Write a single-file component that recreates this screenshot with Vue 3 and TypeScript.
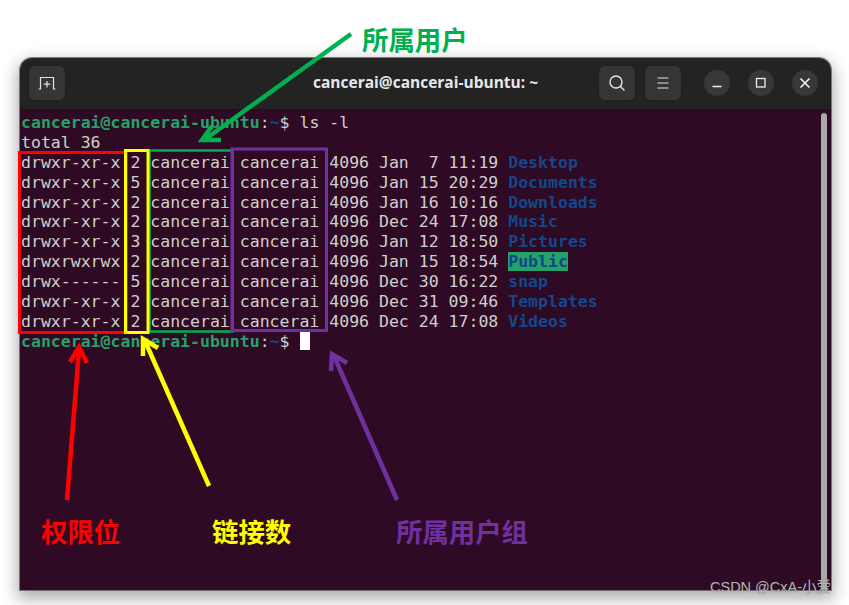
<script setup lang="ts">
interface Row { meta: string; name: string; hl?: boolean }
const rows: Row[] = [
  { meta: 'drwxr-xr-x 2 cancerai cancerai 4096 Jan  7 11:19 ', name: 'Desktop' },
  { meta: 'drwxr-xr-x 5 cancerai cancerai 4096 Jan 15 20:29 ', name: 'Documents' },
  { meta: 'drwxr-xr-x 2 cancerai cancerai 4096 Jan 16 10:16 ', name: 'Downloads' },
  { meta: 'drwxr-xr-x 2 cancerai cancerai 4096 Dec 24 17:08 ', name: 'Music' },
  { meta: 'drwxr-xr-x 3 cancerai cancerai 4096 Jan 12 18:50 ', name: 'Pictures' },
  { meta: 'drwxrwxrwx 2 cancerai cancerai 4096 Jan 15 18:54 ', name: 'Public', hl: true },
  { meta: 'drwx------ 5 cancerai cancerai 4096 Dec 30 16:22 ', name: 'snap' },
  { meta: 'drwxr-xr-x 2 cancerai cancerai 4096 Dec 31 09:46 ', name: 'Templates' },
  { meta: 'drwxr-xr-x 2 cancerai cancerai 4096 Dec 24 17:08 ', name: 'Videos' },
]
</script>

<template>
  <div class="page">
    <section class="window">
      <header class="titlebar">
        <button class="tool">
          <svg width="18" height="18" viewBox="0 0 18 18" fill="none" stroke="#e4e4e4" stroke-width="1.2">
            <path d="M1 15h1.500V3.500h13V15H17" stroke-linecap="round" stroke-linejoin="round" />
            <path d="M9 7v6.500M5.700 10.200h6.600" />
          </svg>
        </button>
        <h1 class="title">cancerai@cancerai-ubuntu: ~</h1>
        <button class="tool">
          <svg width="18" height="18" viewBox="0 0 18 18" fill="none" stroke="#e4e4e4" stroke-width="1.4">
            <circle cx="8" cy="8" r="6" />
            <path d="M12.400 12.400l3.600 3.600" stroke-linecap="round" />
          </svg>
        </button>
        <button class="tool menu">
          <svg width="14" height="14" viewBox="0 0 14 14" fill="none" stroke="#e4e4e4" stroke-width="1.100">
            <path d="M1.500 2h11M1.500 7h11M1.500 12h11" />
          </svg>
        </button>
        <div class="controls">
          <button class="circle">
            <svg width="12" height="12" viewBox="0 0 12 12" fill="none" stroke="#eee" stroke-width="1.500"><path d="M1.500 9.500h9" /></svg>
          </button>
          <button class="circle">
            <svg width="12" height="12" viewBox="0 0 12 12" fill="none" stroke="#eee" stroke-width="1.300"><rect x="1.500" y="1.500" width="8.500" height="8.500" /></svg>
          </button>
          <button class="circle">
            <svg width="12" height="12" viewBox="0 0 12 12" fill="none" stroke="#eee" stroke-width="1.700"><path d="M1.500 1.500l9 9M10.500 1.500l-9 9" /></svg>
          </button>
        </div>
      </header>
      <div class="terminal">
        <div class="output">
          <div class="line"><span class="green">cancerai@cancerai-ubuntu</span>:<span class="blue">~</span>$ ls -l</div>
          <div class="line">total 36</div>
          <div v-for="r in rows" :key="r.name" class="line">{{ r.meta }}<span class="blue" :class="{ hl: r.hl }">{{ r.name }}</span></div>
          <div class="line"><span class="green">cancerai@cancerai-ubuntu</span>:<span class="blue">~</span>$ <span class="cursor"> </span></div>
        </div>
        <div class="scrollbar"></div>
      </div>
    </section>

    <svg class="marks" width="849" height="605" viewBox="0 0 849 605" fill="none">
      <rect x="19.500" y="152.500" width="107" height="180" stroke="#ff0000" stroke-width="3" />
      <rect x="149.500" y="150.500" width="83" height="181" stroke="#00b050" stroke-width="2.500" />
      <rect x="232" y="149" width="94.500" height="181.500" stroke="#7030a0" stroke-width="3" />
      <rect x="125.500" y="150.500" width="22.500" height="182" stroke="#ffff00" stroke-width="3" />
      <g stroke="#00b050" stroke-width="4.500">
        <path d="M351 34L204 140" />
        <path d="M221 140H202L212 126" />
      </g>
      <g stroke="#ff0000" stroke-width="4.500">
        <path d="M67 500L79 350" />
        <path d="M70 362L79 347L87 363" />
      </g>
      <g stroke="#ffff00" stroke-width="4.500">
        <path d="M209 486L145 341" />
        <path d="M143 356L143 339L158 348" />
      </g>
      <g stroke="#7030a0" stroke-width="4.500">
        <path d="M397 500L334 356" />
        <path d="M331 371L332 354L347 363" />
      </g>
    </svg>

    <span class="label label-owner">所属用户</span>
    <span class="label label-perm">权限位</span>
    <span class="label label-links">链接数</span>
    <span class="label label-group">所属用户组</span>
    <span class="watermark">CSDN @CxA-小爱</span>
  </div>
</template>

<style scoped>
.page {
  position: relative;
  width: 849px;
  height: 605px;
  box-sizing: border-box;
  padding: 58px 18px 15px 20px;
  background: #fff;
  overflow: hidden;
}
.window {
  height: 100%;
  display: flex;
  flex-direction: column;
  border-radius: 12px 12px 0 0;
  overflow: hidden;
  box-shadow: 0 0 0 1px rgba(60, 60, 60, 0.6), 0 6px 16px 3px rgba(0, 0, 0, 0.32);
}
.titlebar {
  position: relative;
  flex: none;
  height: 51px;
  box-sizing: border-box;
  display: flex;
  align-items: center;
  gap: 8px;
  padding: 0 0 2px 8px;
  background: #232323;
}
.tool {
  flex: none;
  width: 38px;
  height: 36px;
  border: 1px solid #1e1e1e;
  border-radius: 7px;
  background: #353535;
  padding: 0;
  display: flex;
  align-items: center;
  justify-content: center;
}
.title {
  flex: 1;
  margin: 0;
  padding-left: 239px;
  text-align: left;
  color: #e8e8e8;
  font: 700 15.500px/1 "Open Sans", "Noto Sans", sans-serif;
  white-space: nowrap;
}
.controls {
  display: flex;
  gap: 18px;
  margin: 0 13px 0 14px;
}
.circle {
  width: 26px;
  height: 26px;
  border: 0;
  border-radius: 50%;
  padding: 0;
  background: #383838;
  display: flex;
  align-items: center;
  justify-content: center;
}
.terminal {
  flex: 1;
  display: flex;
  justify-content: space-between;
  background: #2f0a24;
  padding: 4px 4px 0 1px;
  min-height: 0;
}
.output {
  font: 16.530px/19.900px "DejaVu Sans Mono", "Liberation Mono", monospace;
  color: #d0cfcc;
  white-space: pre;
}
.line {
  height: 19.900px;
}
.green {
  color: #26a269;
  font-weight: 700;
}
.blue {
  color: #12488b;
  font-weight: 700;
}
.hl {
  background: #26a269;
}
.cursor {
  display: inline-block;
  width: 10px;
  height: 18px;
  margin-left: 1px;
  background: #fff;
  vertical-align: -3px;
}
.scrollbar {
  width: 6px;
  border-radius: 3px 3px 0 0;
  background: #aaa;
}
.marks {
  position: absolute;
  left: 0;
  top: 0;
  pointer-events: none;
}
.label {
  position: absolute;
  font: 700 26.400px/30px "Noto Sans CJK SC", sans-serif;
  white-space: nowrap;
}
.label-owner { left: 362px; top: 24px; color: #00b050; }
.label-perm { left: 41px; top: 516px; color: #ff0000; }
.label-links { left: 212px; top: 516px; color: #ffff00; }
.label-group { left: 396px; top: 516px; color: #7030a0; }
.watermark {
  position: absolute;
  left: 710px;
  top: 578px;
  color: #b4b4b4;
  font: 14.500px/18px "Liberation Sans", "Noto Sans CJK SC", sans-serif;
  text-shadow: 0 0 1px rgba(60, 60, 60, 0.5);
  white-space: nowrap;
}
</style>
